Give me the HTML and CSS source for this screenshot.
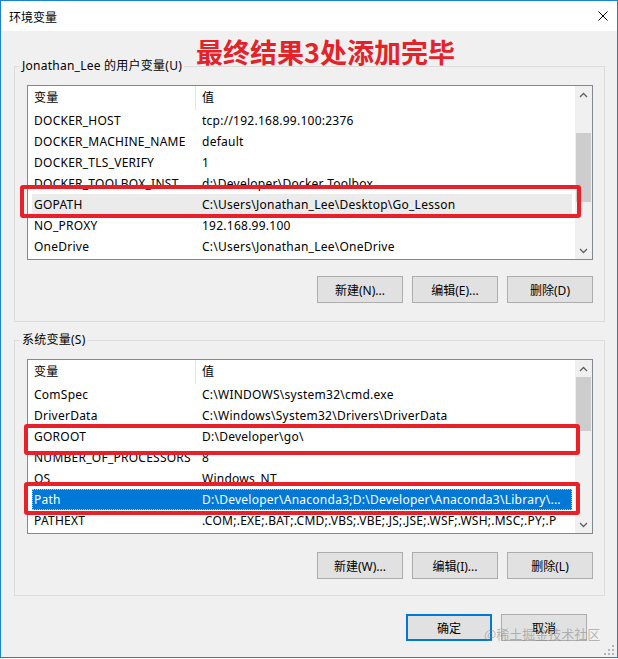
FILE: index.html
```html
<!DOCTYPE html>
<html lang="zh-CN">
<head>
    <meta charset="UTF-8">
    <title>环境变量</title>
    <link rel="stylesheet" href="styles.css">
</head>
<body>
    <div class="window">
        <div class="titlebar">
            <span class="title">环境变量</span>
            <svg class="close" width="10" height="10" viewBox="0 0 10 10">
                <path d="M0.5 0.5L9.5 9.5M9.5 0.5L0.5 9.5" stroke="#000" stroke-width="1" fill="none"/>
            </svg>
        </div>

        <div class="content">
            <div class="note">最终结果3处添加完毕</div>

            <fieldset class="group group-user">
                <legend>Jonathan_Lee 的用户变量(U)</legend>
                <div class="list">
                    <div class="list-body">
                        <div class="list-head">
                            <span class="name">变量</span>
                            <span class="value">值</span>
                        </div>
                        <div class="row"><span class="name">DOCKER_HOST</span><span class="value">tcp://192.168.99.100:2376</span></div>
                        <div class="row"><span class="name">DOCKER_MACHINE_NAME</span><span class="value">default</span></div>
                        <div class="row"><span class="name">DOCKER_TLS_VERIFY</span><span class="value">1</span></div>
                        <div class="row"><span class="name">DOCKER_TOOLBOX_INST</span><span class="value">d:\Developer\Docker Toolbox</span></div>
                        <div class="row inactive"><span class="name">GOPATH</span><span class="value">C:\Users\Jonathan_Lee\Desktop\Go_Lesson</span></div>
                        <div class="row"><span class="name">NO_PROXY</span><span class="value">192.168.99.100</span></div>
                        <div class="row"><span class="name">OneDrive</span><span class="value">C:\Users\Jonathan_Lee\OneDrive</span></div>
                    </div>
                    <div class="scrollbar">
                        <div class="arrow">
                            <svg width="9" height="6" viewBox="0 0 9 6"><polyline points="1,5 4.5,1.5 8,5" fill="none" stroke="#606060" stroke-width="1.3"/></svg>
                        </div>
                        <div class="track"><div class="thumb thumb-user"></div></div>
                        <div class="arrow">
                            <svg width="9" height="6" viewBox="0 0 9 6"><polyline points="1,1 4.5,4.5 8,1" fill="none" stroke="#606060" stroke-width="1.3"/></svg>
                        </div>
                    </div>
                </div>
                <div class="buttons">
                    <button>新建(N)...</button>
                    <button>编辑(E)...</button>
                    <button>删除(D)</button>
                </div>
            </fieldset>

            <fieldset class="group group-system">
                <legend>系统变量(S)</legend>
                <div class="list">
                    <div class="list-body">
                        <div class="list-head">
                            <span class="name">变量</span>
                            <span class="value">值</span>
                        </div>
                        <div class="row"><span class="name">ComSpec</span><span class="value">C:\WINDOWS\system32\cmd.exe</span></div>
                        <div class="row"><span class="name">DriverData</span><span class="value">C:\Windows\System32\Drivers\DriverData</span></div>
                        <div class="row"><span class="name">GOROOT</span><span class="value">D:\Developer\go\</span></div>
                        <div class="row"><span class="name">NUMBER_OF_PROCESSORS</span><span class="value">8</span></div>
                        <div class="row"><span class="name">OS</span><span class="value">Windows_NT</span></div>
                        <div class="row selected"><span class="name">Path</span><span class="value">D:\Developer\Anaconda3;D:\Developer\Anaconda3\Library\...</span></div>
                        <div class="row"><span class="name">PATHEXT</span><span class="value">.COM;.EXE;.BAT;.CMD;.VBS;.VBE;.JS;.JSE;.WSF;.WSH;.MSC;.PY;.P</span></div>
                    </div>
                    <div class="scrollbar">
                        <div class="arrow">
                            <svg width="9" height="6" viewBox="0 0 9 6"><polyline points="1,5 4.5,1.5 8,5" fill="none" stroke="#606060" stroke-width="1.3"/></svg>
                        </div>
                        <div class="track"><div class="thumb thumb-system"></div></div>
                        <div class="arrow">
                            <svg width="9" height="6" viewBox="0 0 9 6"><polyline points="1,1 4.5,4.5 8,1" fill="none" stroke="#606060" stroke-width="1.3"/></svg>
                        </div>
                    </div>
                </div>
                <div class="buttons">
                    <button>新建(W)...</button>
                    <button>编辑(I)...</button>
                    <button>删除(L)</button>
                </div>
            </fieldset>

            <div class="dialog-buttons">
                <button class="default">确定</button>
                <button>取消</button>
            </div>

            <!-- red marks drawn over the list rows -->
            <div class="mark mark-gopath"></div>
            <div class="mark mark-goroot"></div>
            <div class="mark mark-path"></div>

            <span class="watermark">@稀土掘金技术社区</span>
            <svg class="grip" width="10" height="10" viewBox="0 0 10 10">
                <rect x="8" y="0" width="2" height="2" fill="#b4b4b4"/>
                <rect x="4" y="4" width="2" height="2" fill="#b4b4b4"/>
                <rect x="8" y="4" width="2" height="2" fill="#b4b4b4"/>
                <rect x="0" y="8" width="2" height="2" fill="#b4b4b4"/>
                <rect x="4" y="8" width="2" height="2" fill="#b4b4b4"/>
                <rect x="8" y="8" width="2" height="2" fill="#b4b4b4"/>
            </svg>
        </div>
    </div>
</body>
</html>
```

FILE: styles.css
```css
* {
    box-sizing: border-box;
}
body {
    margin: 0;
    background: #fff;
    font-family: "Noto Sans", "Noto Sans CJK SC", sans-serif;
    font-size: 12px;
    color: #000;
}
.window {
    width: 618px;
    height: 658px;
    border: 1px solid #1883d7;
    display: flex;
    flex-direction: column;
}
.titlebar {
    height: 30px;
    background: #fff;
    display: flex;
    align-items: center;
    justify-content: space-between;
    padding: 0 9px 0 8px;
}
.title {
    font-family: "Noto Sans CJK SC", sans-serif;
}
.content {
    flex: 1;
    background: #f0f0f0;
    position: relative;
    display: flex;
    flex-direction: column;
}
.note {
    position: absolute;
    left: 195px;
    top: 7px;
    font-family: "Noto Sans CJK SC", sans-serif;
    font-size: 27px;
    font-weight: bold;
    line-height: 27px;
    color: #e4222a;
}
.group {
    margin: 27px 12px 0 13px;
    padding: 11px 11px 18px 5px;
    border: 1px solid #dcdcdc;
    min-width: 0;
}
.group-system {
    margin-top: 10px;
    padding-bottom: 16px;
}
.group legend {
    padding: 0 2px;
    line-height: 16px;
    letter-spacing: 0.25px;
}
.list {
    margin-left: 7px;
    height: 175px;
    border: 1px solid #828790;
    background: #fff;
    display: flex;
}
.list-body {
    flex: 1;
    overflow: hidden;
    letter-spacing: 0.25px;
}
.list-head,
.row {
    display: flex;
    white-space: nowrap;
}
.list-head {
    height: 24px;
    line-height: 24px;
}
.list-head .name {
    border-right: 1px solid #e5e5e5;
}
.row {
    height: 21px;
    line-height: 21px;
}
.name {
    width: 168px;
    flex-shrink: 0;
    padding-left: 6px;
    overflow: hidden;
}
.value {
    padding-left: 6px;
    overflow: hidden;
}
.row.inactive,
.row.selected {
    margin: 0 3px 0 4px;
}
.row.inactive .name,
.row.selected .name {
    width: 164px;
    padding-left: 2px;
}
.row.inactive {
    background: #ebebeb;
}
.row.selected {
    background: #0078d7;
    color: #fff;
    outline: 1px dotted #9cc8f0;
    outline-offset: -1px;
}
.scrollbar {
    width: 17px;
    background: #f0f0f0;
    display: flex;
    flex-direction: column;
}
.arrow {
    height: 17px;
    display: flex;
    align-items: center;
    justify-content: center;
}
.track {
    flex: 1;
}
.thumb {
    margin: 0 1px;
    background: #cdcdcd;
}
.thumb-user {
    margin-top: 30px;
    height: 69px;
}
.thumb-system {
    height: 54px;
}
.buttons {
    display: flex;
    justify-content: flex-end;
    gap: 9px;
    margin-top: 16px;
}
.group-system .buttons {
    margin-top: 18px;
}
button {
    width: 86px;
    height: 27px;
    padding: 0;
    font: inherit;
    color: #000;
    background: #e1e1e1;
    border: 1px solid #adadad;
}
.dialog-buttons {
    display: flex;
    justify-content: flex-end;
    gap: 9px;
    margin: 18px 30px 0 0;
}
button.default {
    border: 2px solid #0078d7;
}
.mark {
    position: absolute;
    border: 4px solid #e8202a;
    border-radius: 3px;
}
.mark-gopath {
    left: 19px;
    top: 154px;
    width: 561px;
    height: 33px;
}
.mark-goroot {
    left: 23px;
    top: 393px;
    width: 556px;
    height: 31px;
}
.mark-path {
    left: 23px;
    top: 451px;
    width: 556px;
    height: 33px;
}
.watermark {
    position: absolute;
    left: 483px;
    top: 595px;
    font-family: "Noto Sans CJK SC", sans-serif;
    font-size: 13px;
    line-height: 16px;
    color: rgba(130, 130, 130, 0.55);
}
.grip {
    position: absolute;
    right: 3px;
    bottom: 2px;
}
```
